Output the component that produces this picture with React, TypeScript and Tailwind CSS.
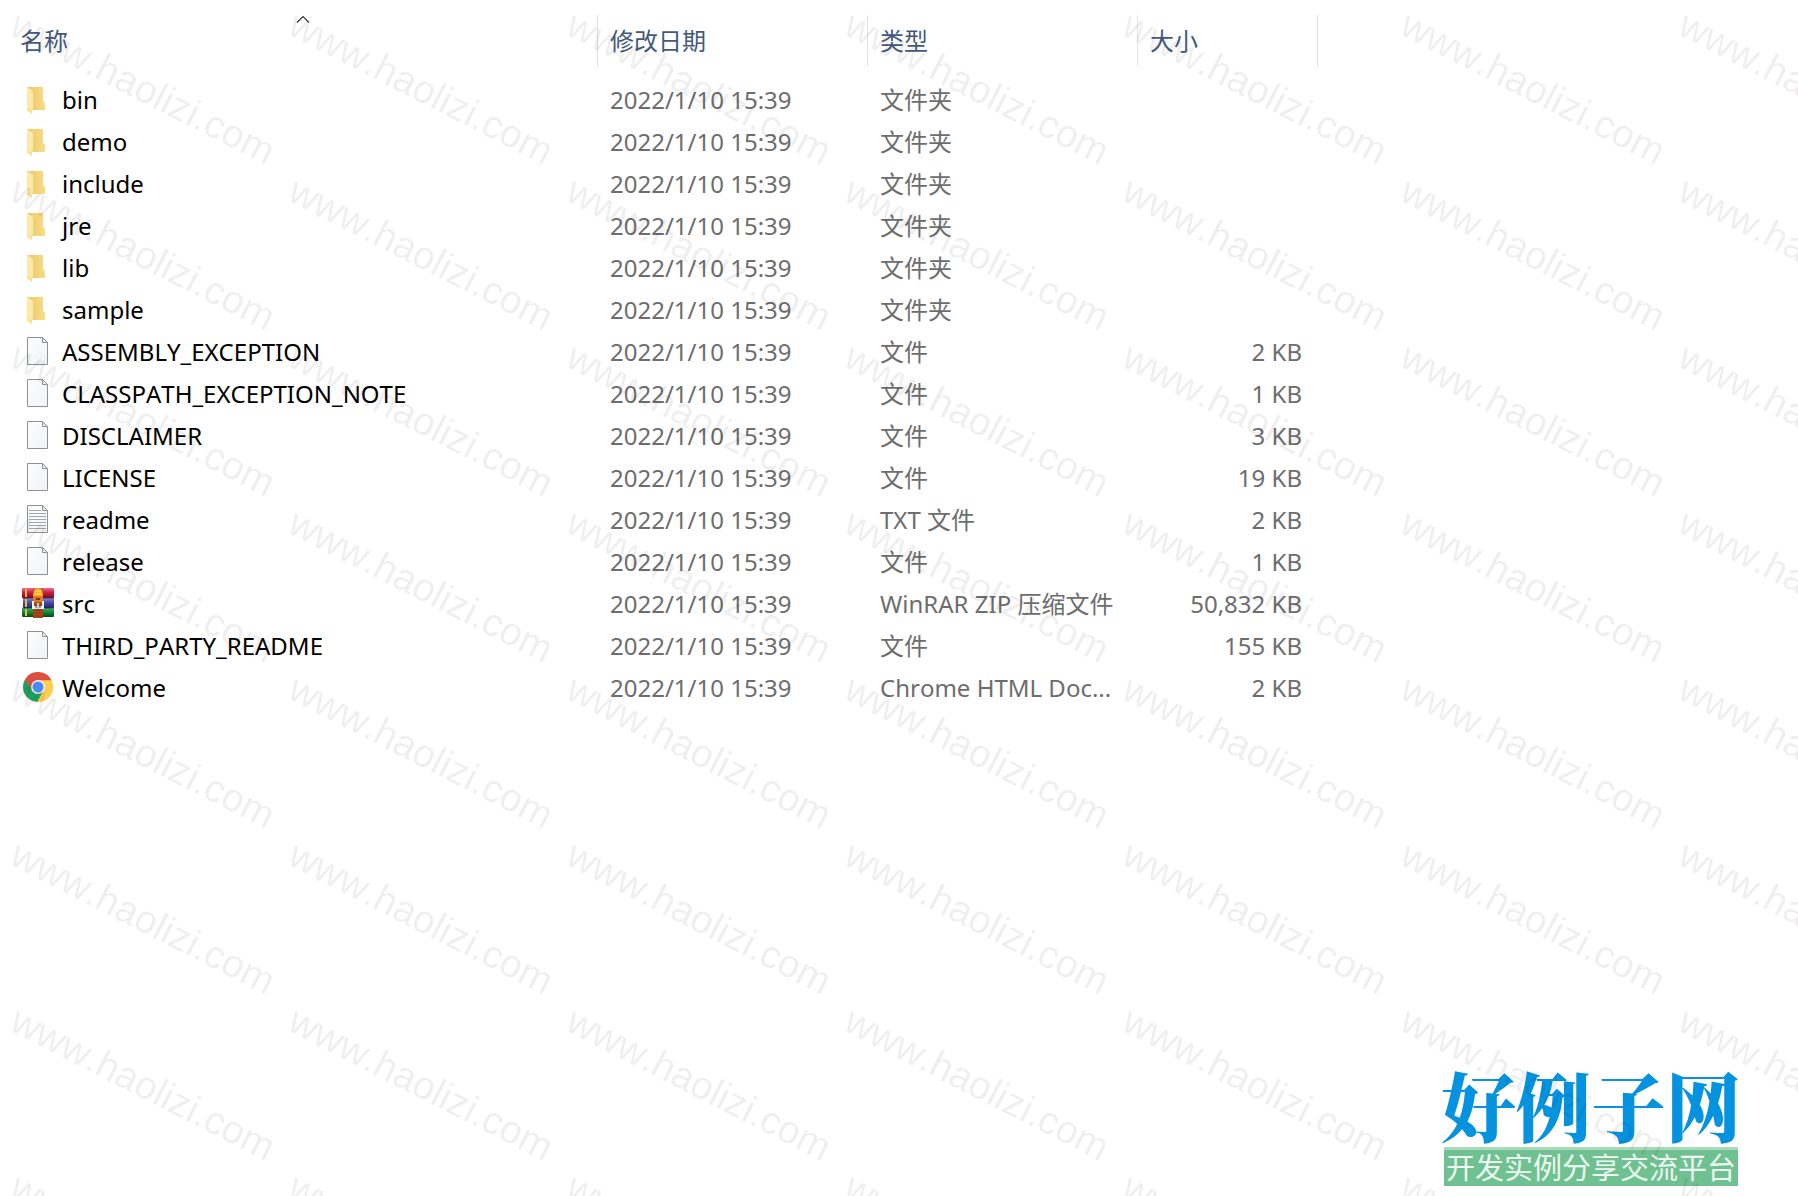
import { ReactNode } from 'react';

type FileKind = 'folder' | 'file' | 'text' | 'archive' | 'chrome';

interface FileEntry {
  name: string;
  kind: FileKind;
  type: string;
  size?: string;
}

const MODIFIED = '2022/1/10 15:39';

const files: FileEntry[] = [
  { name: 'bin', kind: 'folder', type: '文件夹' },
  { name: 'demo', kind: 'folder', type: '文件夹' },
  { name: 'include', kind: 'folder', type: '文件夹' },
  { name: 'jre', kind: 'folder', type: '文件夹' },
  { name: 'lib', kind: 'folder', type: '文件夹' },
  { name: 'sample', kind: 'folder', type: '文件夹' },
  { name: 'ASSEMBLY_EXCEPTION', kind: 'file', type: '文件', size: '2 KB' },
  { name: 'CLASSPATH_EXCEPTION_NOTE', kind: 'file', type: '文件', size: '1 KB' },
  { name: 'DISCLAIMER', kind: 'file', type: '文件', size: '3 KB' },
  { name: 'LICENSE', kind: 'file', type: '文件', size: '19 KB' },
  { name: 'readme', kind: 'text', type: 'TXT 文件', size: '2 KB' },
  { name: 'release', kind: 'file', type: '文件', size: '1 KB' },
  { name: 'src', kind: 'archive', type: 'WinRAR ZIP 压缩文件', size: '50,832 KB' },
  { name: 'THIRD_PARTY_README', kind: 'file', type: '文件', size: '155 KB' },
  { name: 'Welcome', kind: 'chrome', type: 'Chrome HTML Doc...', size: '2 KB' },
];

function FolderIcon() {
  return (
    <svg viewBox="0 0 32 32" className="size-8 shrink-0" aria-hidden="true">
      <defs>
        <linearGradient id="folderBack" x1="0" y1="0" x2="1" y2="0">
          <stop offset="0" stopColor="#eac86c" />
          <stop offset="1" stopColor="#fadc85" />
        </linearGradient>
      </defs>
      <path d="M5 3H21V17L23 19V26H5Z" fill="url(#folderBack)" />
      <path d="M5 3L11 7V25H10V30L5 26Z" fill="#ffe9a9" />
      <path d="M5 24L10 26V30L5 26.5Z" fill="#ffdf8c" />
    </svg>
  );
}

function DocIcon({ lines = false }: { lines?: boolean }) {
  return (
    <svg viewBox="0 0 32 32" className="size-8 shrink-0" aria-hidden="true">
      <defs>
        <linearGradient id="docPaper" x1="0" y1="0" x2="1" y2="1">
          <stop offset="0" stopColor="#fdfdfd" />
          <stop offset="1" stopColor="#f0f3f5" />
        </linearGradient>
      </defs>
      <path d="M5.5 1.5H20.5L25.5 6.5V28.5H5.5Z" fill="url(#docPaper)" stroke="#8f9193" />
      <path d="M20.5 1.5V6.5H25.5Z" fill="#e9ebec" stroke="#8f9193" />
      {lines && (
        <path
          d="M7 6.5H19M7 9.5H24M7 12.5H24M7 15.5H24M7 18.5H24M7 21.5H24M7 24.5H24"
          stroke="#a4a6a8"
        />
      )}
    </svg>
  );
}

function ArchiveIcon() {
  return (
    <svg viewBox="0 0 32 32" className="size-8 shrink-0" aria-hidden="true">
      <defs>
        <linearGradient id="bookRed" x1="0" y1="0" x2="0" y2="1">
          <stop offset="0" stopColor="#ef6f8e" />
          <stop offset="0.45" stopColor="#c81f40" />
          <stop offset="1" stopColor="#7d0c22" />
        </linearGradient>
        <linearGradient id="bookBlue" x1="0" y1="0" x2="0" y2="1">
          <stop offset="0" stopColor="#7f86d2" />
          <stop offset="0.5" stopColor="#4347a3" />
          <stop offset="1" stopColor="#23266b" />
        </linearGradient>
        <linearGradient id="bookGreen" x1="0" y1="0" x2="0" y2="1">
          <stop offset="0" stopColor="#3fae62" />
          <stop offset="0.5" stopColor="#14823a" />
          <stop offset="1" stopColor="#07461c" />
        </linearGradient>
      </defs>
      <rect x="0" y="0" width="32" height="10" rx="1" fill="url(#bookRed)" />
      <rect x="1" y="10" width="31" height="10" rx="1" fill="url(#bookBlue)" />
      <rect x="0" y="20" width="32" height="9" rx="1" fill="url(#bookGreen)" />
      <path d="M4 1V9M4 11V19M4 21V28" stroke="#f2b92c" strokeWidth="2" />
      <path d="M0 10H32M0 20H32" stroke="#2b1b30" strokeWidth="0.6" />
      <rect x="11" y="1" width="10" height="29" fill="#a9491a" />
      <path d="M11 22H21M11 25H21M11 28H21" stroke="#8a3510" strokeWidth="0.8" />
      <path d="M12 2L16 0L20 2L21 8H11Z" fill="#f5b322" />
      <path d="M13 3H19M12 6H20" stroke="#ffdf70" strokeWidth="1.2" />
      <rect x="11" y="8" width="10" height="6" fill="#dd7b20" />
      <rect x="14" y="10" width="4" height="2" fill="#7a2d0a" />
      <path d="M10 13H12V18H20V13H22V21H10Z" fill="#f4f4f4" />
      <path d="M13 14H19V17H13Z" fill="#b4500f" />
      <path d="M15 15H17V21H15Z" fill="#c9c9c9" />
      <path d="M14 16V20M18 16V20" stroke="#444" strokeWidth="1" />
    </svg>
  );
}

function ChromeIcon() {
  return (
    <svg viewBox="0 0 32 32" className="size-8 shrink-0" aria-hidden="true">
      <circle cx="16" cy="15" r="15" fill="#fecc4f" />
      <path d="M16 8.5H29.5A15 15 0 0 0 3 7.5L9.7 18.5Z" fill="#dc4e41" />
      <path d="M3 7.5A15 15 0 0 0 15.5 30L21.6 18.5L16 15L10 18Z" fill="#1fa15f" />
      <path d="M16 8.5H29.5A15 15 0 0 1 15.5 30L21.8 18.2Z" fill="#fecc4f" />
      <circle cx="16" cy="15" r="6.9" fill="#f2f2f2" />
      <circle cx="16" cy="15" r="5.5" fill="#4a8af4" />
    </svg>
  );
}

const icons: Record<FileKind, ReactNode> = {
  folder: <FolderIcon />,
  file: <DocIcon />,
  text: <DocIcon lines />,
  archive: <ArchiveIcon />,
  chrome: <ChromeIcon />,
};

function HeaderCell({ label, sorted = false }: { label: string; sorted?: boolean }) {
  return (
    <th scope="col" aria-sort={sorted ? 'ascending' : undefined} className="relative p-0 font-normal">
      <button
        type="button"
        className="flex h-[51px] w-full items-center border-r border-[#e2e2e2] pl-3 text-[#44597b]"
      >
        {label}
      </button>
      {sorted && (
        <svg
          viewBox="0 0 14 8"
          className="absolute top-0 left-1/2 h-2 w-[14px] -translate-x-1/2"
          fill="none"
          stroke="#333"
          strokeWidth="1.2"
          aria-hidden="true"
        >
          <path d="M1 7.5L7 1.5L13 7.5" />
        </svg>
      )}
    </th>
  );
}

function Watermark() {
  return (
    <div
      aria-hidden="true"
      className="pointer-events-none absolute inset-0 grid auto-rows-[166px] grid-cols-[repeat(7,278px)] overflow-hidden pt-1 pl-1"
    >
      {Array.from({ length: 56 }, (_, i) => (
        <div key={i} className="flex items-center justify-center">
          <span className="shrink-0 rotate-[27deg] font-['Liberation_Sans',sans-serif] text-[39px] leading-none text-black/8">
            www.haolizi.com
          </span>
        </div>
      ))}
    </div>
  );
}

export default function App() {
  return (
    <div className="relative flex min-h-screen flex-col overflow-hidden bg-white pt-[15px] pb-[10px] font-['Noto_Sans','Noto_Sans_CJK_SC',sans-serif] text-[24px] leading-8 [font-kerning:none]">
      <table className="ml-2 w-[1310px] table-fixed border-collapse text-left">
        <colgroup>
          <col className="w-[590px]" />
          <col className="w-[270px]" />
          <col className="w-[270px]" />
          <col className="w-[180px]" />
        </colgroup>
        <thead>
          <tr>
            <HeaderCell label="名称" sorted />
            <HeaderCell label="修改日期" />
            <HeaderCell label="类型" />
            <HeaderCell label="大小" />
          </tr>
        </thead>
        <tbody className="text-[#6d6d6d] before:block before:h-[13px]">
          {files.map((file) => (
            <tr key={file.name} className="h-[42px]">
              <td className="p-0 pl-[14px] text-black">
                <div className="flex items-center gap-2">
                  {icons[file.kind]}
                  <span>{file.name}</span>
                </div>
              </td>
              <td className="p-0 pl-3">{MODIFIED}</td>
              <td className="p-0 pl-3 whitespace-nowrap">{file.type}</td>
              <td className="p-0 pr-4 text-right">{file.size}</td>
            </tr>
          ))}
        </tbody>
      </table>

      {/* Site logo */}
      <div className="mt-auto mr-[60px] w-[294px] self-end whitespace-nowrap">
        <div className="flex justify-center pb-2 font-['Noto_Serif_CJK_SC','Noto_Sans_CJK_SC',serif] text-[75px] leading-[70px] font-black text-[#0593e0]">
          好例子网
        </div>
        <div className="border-t-[3px] border-[#a9d9bc] bg-[#70c191] px-[2px] text-[29px] leading-9 text-[#eef8f2]">
          开发实例分享交流平台
        </div>
      </div>

      <Watermark />
    </div>
  );
}
